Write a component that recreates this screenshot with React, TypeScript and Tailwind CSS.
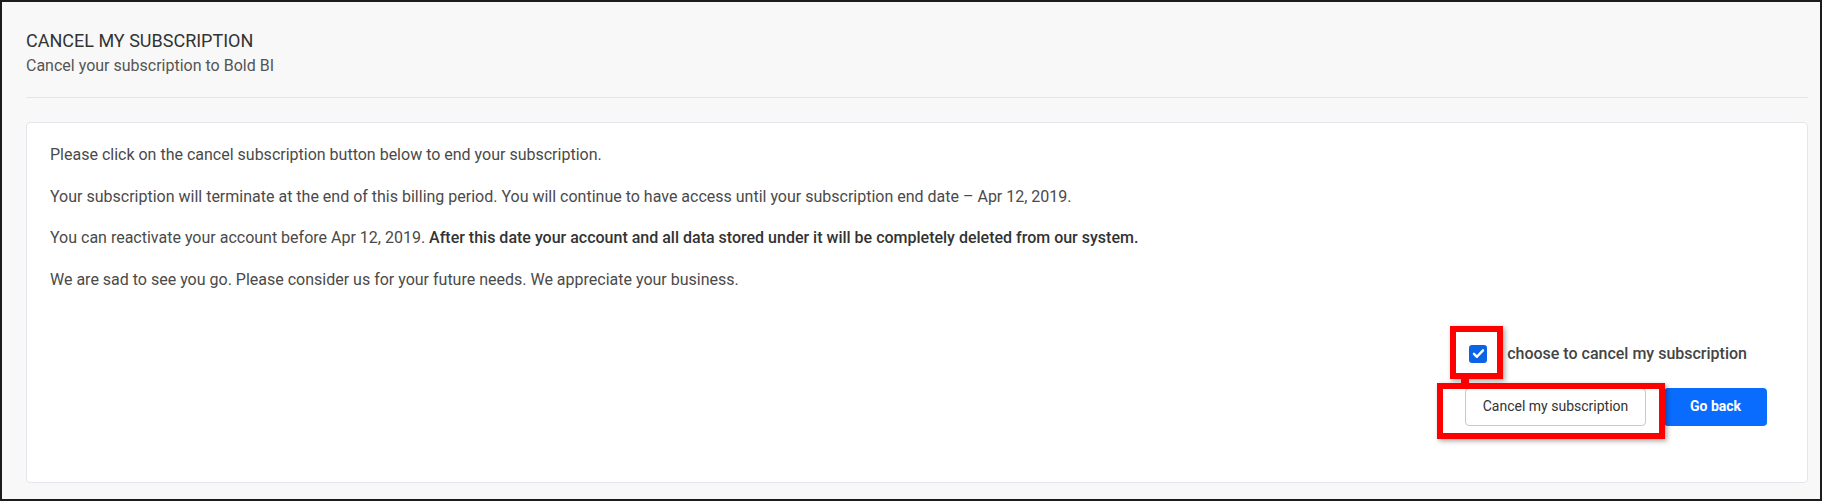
const paragraphs = [
  "Please click on the cancel subscription button below to end your subscription.",
  "Your subscription will terminate at the end of this billing period. You will continue to have access until your subscription end date – Apr 12, 2019.",
];

const App = () => {
  return (
    <div
      className="relative w-[1822px] h-[501px] border-2 border-[#1c1c1c] bg-[#f8f8f8] pl-6 pr-3 pt-[28px] text-[#333]"
      style={{ fontFamily: "Roboto, 'Liberation Sans', sans-serif" }}
    >
      <h1 className="text-[18px] leading-[22px] text-[#333]">CANCEL MY SUBSCRIPTION</h1>
      <p className="mt-[4px] text-[16px] leading-[20px] text-[#555]">Cancel your subscription to Bold BI</p>
      <div className="mt-[21px] border-t border-[#e4e4e4]" />

      <div className="mt-[24px] h-[361px] rounded-[4px] border border-[#e3e6ea] bg-white pl-[23px] pr-[40px] pt-[22px] flex flex-col">
        <div className="flex flex-col gap-[21.5px] text-[16px] leading-[20px] text-[#4a4a4a]">
          {paragraphs.map((text) => (
            <p key={text}>{text}</p>
          ))}
          <p>
            You can reactivate your account before Apr 12, 2019.{" "}
            <span className="font-medium text-[#333]">
              After this date your account and all data stored under it will be completely deleted from our system.
            </span>
          </p>
          <p>We are sad to see you go. Please consider us for your future needs. We appreciate your business.</p>
        </div>

        <div className="mt-[54px] flex items-center justify-end pr-[20px]">
          <span className="flex size-[18px] items-center justify-center rounded-[3px] bg-[#0b63e5]">
            <svg viewBox="0 0 16 16" className="size-[15px]" fill="none" stroke="white" strokeWidth="2.6" strokeLinecap="round" strokeLinejoin="round">
              <path d="M3.2 8.4l3.1 3.1 6.5-6.8" />
            </svg>
          </span>
          <span className="ml-[20px] text-[16px] leading-[20px] font-medium text-[#444]">choose to cancel my subscription</span>
        </div>

        <div className="mt-[24px] flex justify-end gap-[18px]">
          <button className="h-[38px] w-[181px] rounded-[4px] border border-[#c9c9c9] bg-white text-[14px] text-[#333]">
            Cancel my subscription
          </button>
          <button className="h-[38px] w-[103px] rounded-[4px] bg-[#0a6cff] text-[14px] font-bold text-white">
            Go back
          </button>
        </div>
      </div>

      {/* annotation boxes */}
      <div className="absolute left-[1448px] top-[324px] size-[53px] border-[6px] border-[#ff0000] shadow-[2px_2px_5px_rgba(0,0,0,0.35)]" />
      <div className="absolute left-[1459px] top-[377px] h-[5px] w-[8px] bg-[#ff0000]" />
      <div className="absolute left-[1435px] top-[381px] h-[56px] w-[228px] border-[6px] border-[#ff0000] shadow-[2px_2px_5px_rgba(0,0,0,0.35)]" />
    </div>
  );
};

export default App;
